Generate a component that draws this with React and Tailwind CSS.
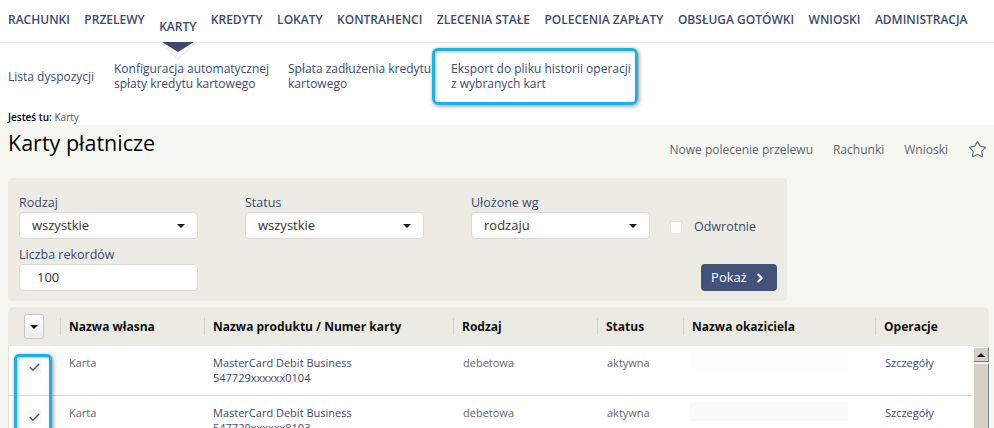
import { Star, ChevronRight, Check } from "lucide-react";

const nav = [
    "RACHUNKI",
    "PRZELEWY",
    "KARTY",
    "KREDYTY",
    "LOKATY",
    "KONTRAHENCI",
    "ZLECENIA STAŁE",
    "POLECENIA ZAPŁATY",
    "OBSŁUGA GOTÓWKI",
    "WNIOSKI",
    "ADMINISTRACJA",
];

const rows = [
    { name: "Karta", product: "MasterCard Debit Business", number: "547729xxxxxx0104" },
    { name: "Karta", product: "MasterCard Debit Business", number: "547729xxxxxx8103" },
];

function Caret({ className = "" }) {
    return (
        <span
            className={
                "inline-block w-0 h-0 border-l-[4px] border-r-[4px] border-t-[4px] border-l-transparent border-r-transparent border-t-[#111] " +
                className
            }
        />
    );
}

function SelectBox({ value }) {
    return (
        <div className="h-[27px] w-[179px] bg-white border border-[#dcdcd6] rounded-[4px] flex items-center justify-between pl-[12px] pr-[12px] text-[13px] text-[#333]">
            <span>{value}</span>
            <Caret />
        </div>
    );
}

function Label({ children }) {
    return (
        <div className="text-[12.5px] leading-[19px] text-[#3c4a6d]">{children}</div>
    );
}

function HeadCell({ w, children, first }) {
    return (
        <div className={"flex items-center h-full " + w}>
            {!first && <span className="w-px h-[17px] bg-[#d3d3ca]" />}
            <span className="pl-[8px] text-[12px] font-bold text-[#111] whitespace-nowrap">
                {children}
            </span>
        </div>
    );
}

export default function App() {
    return (
        <div className="h-screen overflow-hidden flex flex-col bg-white font-['Open_Sans',sans-serif]">
            {/* menu główne */}
            <div className="relative z-10 h-[43px] shrink-0 border-b border-[#e3e3e3] flex gap-[14.5px] px-2 pt-[12px] text-[12px] font-semibold leading-[16px] text-[#3d4a6b]">
                {nav.map((item) =>
                    item === "KARTY" ? (
                        <div key={item} className="relative mt-[7px]">
                            {item}
                            <svg
                                className="absolute top-full left-1/2 -translate-x-1/2"
                                width="36"
                                height="18"
                                viewBox="0 0 36 18"
                            >
                                <polygon points="0,0 36,0 18,17" fill="#fff" stroke="#e4e4e4" />
                                <polygon points="2,0 34,0 18,10" fill="#3d4a6b" />
                            </svg>
                        </div>
                    ) : (
                        <div key={item} className="whitespace-nowrap">
                            {item}
                        </div>
                    )
                )}
            </div>

            {/* podmenu */}
            <div className="h-[66px] shrink-0 flex items-center px-2 text-[12px] leading-[15px] text-[#3d4b6e] whitespace-nowrap">
                <div className="w-[106px]">Lista dyspozycji</div>
                <div className="w-[174px]">
                    Konfiguracja automatycznej
                    <br />
                    spłaty kredytu kartowego
                </div>
                <div className="w-[144px]">
                    Spłata zadłużenia kredytu
                    <br />
                    kartowego
                </div>
                <div className="w-[206px] h-[57px] border-[3px] border-[#1cb0e8] rounded-[6px] pl-[16px] flex items-center shadow-[1px_1px_4px_rgba(0,0,0,0.45),inset_1px_1px_3px_rgba(0,0,0,0.25)]">
                    <div>
                        Eksport do pliku historii operacji
                        <br />z wybranych kart
                    </div>
                </div>
            </div>

            <div className="h-[16px] shrink-0 px-2 text-[10px] leading-[16px] text-[#555]">
                <span className="font-semibold text-black">Jesteś tu:</span> Karty
            </div>

            {/* treść */}
            <div className="flex-1 bg-[#f7f7f1]">
                <div className="h-[53px] flex justify-between pl-2 pr-[7px]">
                    <h1 className="pt-[4px] text-[21.5px] leading-[28px] text-black">
                        Karty płatnicze
                    </h1>
                    <div className="flex items-start gap-5 mt-[16px] text-[12px] leading-[18px] text-[#5b6670]">
                        <span>Nowe polecenie przelewu</span>
                        <span>Rachunki</span>
                        <span>Wnioski</span>
                        <Star size={19} strokeWidth={1.5} className="-mt-[1px] text-[#6b747c]" />
                    </div>
                </div>

                {/* filtry */}
                <div className="mx-2 w-[779px] rounded-[4px] bg-[#ececE5] pl-[11px] pr-[10px] pt-[15px] pb-[10px]">
                    <div className="flex">
                        <div className="w-[226px]">
                            <Label>Rodzaj</Label>
                            <SelectBox value="wszystkie" />
                        </div>
                        <div className="w-[226px]">
                            <Label>Status</Label>
                            <SelectBox value="wszystkie" />
                        </div>
                        <div className="w-[179px]">
                            <Label>Ułożone wg</Label>
                            <SelectBox value="rodzaju" />
                        </div>
                        <div className="mt-[21px] h-[27px] ml-[20px] flex items-center">
                            <span className="w-[12px] h-[13px] bg-white rounded-[2px] border border-[#e4e4de]" />
                            <span className="ml-[12px] text-[12.5px] text-[#3c4a6d]">Odwrotnie</span>
                        </div>
                    </div>
                    <div className="flex justify-between items-end mt-[4px]">
                        <div>
                            <Label>Liczba rekordów</Label>
                            <div className="h-[27px] w-[179px] bg-white border border-[#dcdcd6] rounded-[4px] flex items-center pl-[17px] text-[13px] text-[#333]">
                                100
                            </div>
                        </div>
                        <button className="h-[27px] w-[76px] bg-[#435279] rounded-[4px] flex items-center justify-center gap-[6px] text-[13px] text-white">
                            Pokaż
                            <ChevronRight size={14} strokeWidth={3.5} />
                        </button>
                    </div>
                </div>

                {/* tabela */}
                <div className="mt-[6px] ml-2 w-[981px]">
                    <div className="h-[39px] rounded-t-[6px] bg-[#ebebe3] flex items-center">
                        <div className="w-[52px] h-full flex items-center pl-[16px]">
                            <div className="w-[20px] h-[25px] rounded-[3px] border border-[#c8c8c2] bg-gradient-to-b from-white to-[#ececec] flex items-center justify-center">
                                <Caret className="border-l-[3px] border-r-[3px] border-t-[3px]" />
                            </div>
                        </div>
                        <HeadCell w="w-[144px]">Nazwa własna</HeadCell>
                        <HeadCell w="w-[249px]">Nazwa produktu / Numer karty</HeadCell>
                        <HeadCell w="w-[144px]">Rodzaj</HeadCell>
                        <HeadCell w="w-[86px]">Status</HeadCell>
                        <HeadCell w="w-[192px]">Nazwa okaziciela</HeadCell>
                        <HeadCell w="w-[98px]">Operacje</HeadCell>
                    </div>

                    <div className="relative flex">
                        <div className="w-[965px]">
                            {rows.map((r, i) => (
                                <div
                                    key={i}
                                    className="h-[50px] border-b border-[#dcdcd5] bg-white flex pt-[10px] text-[11px] leading-[14.5px] text-[#666] shadow-[inset_1px_0_0_#e2e2db]"
                                >
                                    <div className="w-[52px] flex justify-center">
                                        <div className="mt-[4px] w-[15px] h-[14px] rounded-[2px] bg-[#f7f7f7] flex items-center justify-center">
                                            <Check size={13} strokeWidth={2.5} className="text-[#4a5578]" />
                                        </div>
                                    </div>
                                    <div className="w-[144px] pl-[9px]">{r.name}</div>
                                    <div className="w-[249px] pl-[9px] text-[#3d4a6b]">
                                        {r.product}
                                        <br />
                                        {r.number}
                                    </div>
                                    <div className="w-[144px] pl-[10px]">debetowa</div>
                                    <div className="w-[86px] pl-[10px]">aktywna</div>
                                    <div className="w-[192px] pl-[7px]">
                                        <div
                                            className={
                                                "w-[158px] h-[19px] -mt-[4px] " +
                                                (i === 1 ? "bg-[#f9f9f9]" : "bg-[#fdfdfd]")
                                            }
                                        />
                                    </div>
                                    <div className="w-[98px] pl-[10px] text-[#3d4a6b]">Szczegóły</div>
                                </div>
                            ))}
                        </div>

                        {/* pasek przewijania */}
                        <div className="w-[16px] bg-[#e6e3dc] flex flex-col">
                            <div className="mt-[1px] h-[15px] bg-[#d4d0c8] border-t border-l border-t-white border-l-white border-b border-r border-b-[#808080] border-r-[#808080] flex items-center justify-center">
                                <span className="w-0 h-0 border-l-[4px] border-r-[4px] border-b-[4px] border-l-transparent border-r-transparent border-b-black" />
                            </div>
                            <div className="mt-[1px] flex-1 bg-[#d4d0c8] border-t border-l border-t-white border-l-white border-r border-r-[#808080]" />
                        </div>

                        <div className="absolute left-[6px] top-[8px] w-[38px] h-[90px] border-[3px] border-[#1cb0e8] rounded-[5px] shadow-[1px_1px_4px_rgba(0,0,0,0.45),inset_1px_1px_3px_rgba(0,0,0,0.25)]" />
                    </div>
                </div>
            </div>
        </div>
    );
}
